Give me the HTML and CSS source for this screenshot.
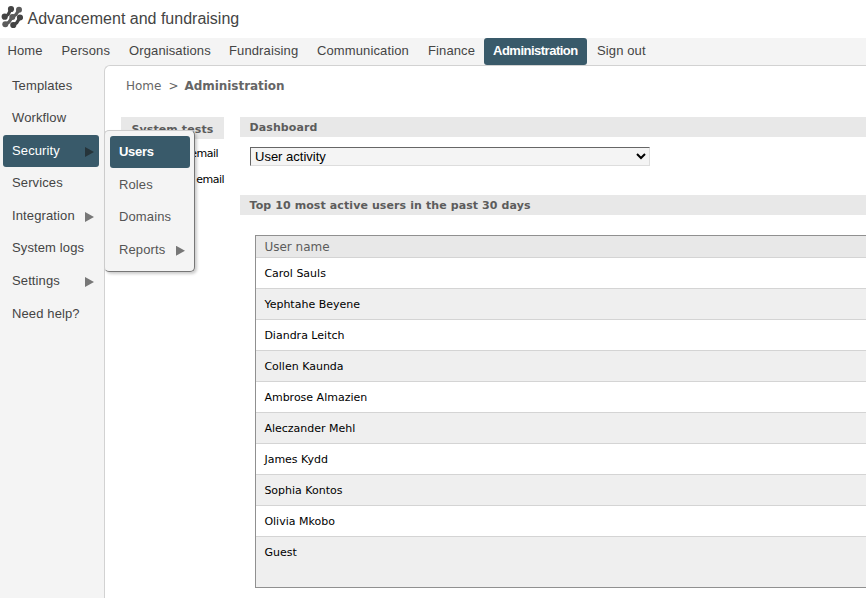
FILE: index.html
```html
<!DOCTYPE html>
<html lang="en">
<head>
<meta charset="utf-8">
<title>Advancement and fundraising</title>
<link rel="stylesheet" href="styles.css">
</head>
<body>
<header class="brand">
  <svg class="logo" viewBox="0 0 22 24" width="22" height="24">
    <g fill="none" stroke-linecap="round" stroke-width="3.2">
      <path stroke="#444" d="M3.700 11.700 7.200 9.500 10 4M12.300 20 15.700 17.800 19 12.500"/>
      <path stroke="#5c5c5c" d="M4.300 19.300 8 17 11.300 11.900 15 9.500 18 4.700"/>
    </g>
    <g fill="#444"><circle cx="3.700" cy="11.700" r="3.100"/><circle cx="10" cy="4" r="3.100"/><circle cx="12.300" cy="20" r="3.100"/><circle cx="19" cy="12.500" r="3.100"/></g>
    <g fill="#5c5c5c"><circle cx="4.300" cy="19.300" r="3"/><circle cx="11.300" cy="11.900" r="3"/><circle cx="18" cy="4.700" r="3"/></g>
  </svg>
  <span>Advancement and fundraising</span>
</header>
<nav class="topnav">
  <a class="w-home">Home</a><a class="w-persons">Persons</a><a class="w-org">Organisations</a><a class="w-fund">Fundraising</a><a class="w-comm">Communication</a><a class="w-fin">Finance</a><a class="active">Administration</a><a>Sign out</a>
</nav>
<div class="layout">
  <aside class="sidebar">
    <a>Templates</a>
    <a>Workflow</a>
    <div class="parent">
      <a class="active">Security<i class="arrow"></i></a>
      <div class="submenu">
        <a class="active">Users</a>
        <a>Roles</a>
        <a>Domains</a>
        <a>Reports<i class="arrow"></i></a>
      </div>
    </div>
    <a>Services</a>
    <a>Integration<i class="arrow"></i></a>
    <a>System logs</a>
    <a>Settings<i class="arrow"></i></a>
    <a>Need help?</a>
  </aside>
  <main class="content">
    <div class="crumbs"><span>Home</span><span class="sep">&gt;</span><b>Administration</b></div>
    <div class="columns">
      <section class="tests">
        <h2>System tests</h2>
        <p>Test email</p>
        <p>Send email</p>
      </section>
      <section class="dashboard">
        <h2>Dashboard</h2>
        <select><option>User activity</option></select>
        <h2>Top 10 most active users in the past 30 days</h2>
        <div class="users">
          <div class="head">User name</div>
          <div class="row">Carol Sauls</div>
          <div class="row">Yephtahe Beyene</div>
          <div class="row">Diandra Leitch</div>
          <div class="row">Collen Kaunda</div>
          <div class="row">Ambrose Almazien</div>
          <div class="row">Aleczander Mehl</div>
          <div class="row">James Kydd</div>
          <div class="row">Sophia Kontos</div>
          <div class="row">Olivia Mkobo</div>
          <div class="row">Guest</div>
        </div>
      </section>
    </div>
  </main>
</div>
</body>
</html>
```
FILE: styles.css
```css
* { box-sizing: border-box; }
body {
  margin: 0;
  height: 598px;
  overflow: hidden;
  background: #fff;
  color: #444;
  font-family: "Liberation Sans", Arial, sans-serif;
  font-size: 13px;
}
.brand {
  display: flex;
  height: 38px;
  padding: 5px 0 0 1px;
  font-size: 16px;
  line-height: 28px;
}
.logo { margin-right: 4.500px; }
.topnav {
  display: flex;
  height: 27px;
  background: #f4f4f4;
  line-height: 25px;
  letter-spacing: .12px;
}
.topnav a { padding-left: 10px; white-space: nowrap; }
.topnav .w-home { width: 53px; padding-left: 7.500px; }
.topnav .w-persons { width: 66px; padding-left: 8.500px; }
.topnav .w-org { width: 100px; }
.topnav .w-fund { width: 88px; }
.topnav .w-comm { width: 111px; }
.topnav .w-fin { width: 66px; }
.topnav .active {
  width: 103px;
  padding-left: 9px;
  border-radius: 3px;
  background: #395a6a;
  color: #fff;
  font-weight: bold;
  letter-spacing: -.5px;
}
.layout { display: flex; height: 533px; background: #f4f4f4; }
.sidebar {
  width: 104px;
  padding: 4px 5px 0 3px;
  letter-spacing: .12px;
}
.sidebar a {
  display: flex;
  justify-content: space-between;
  align-items: center;
  height: 32px;
  margin-bottom: .6px;
  padding: 0 5px 0 9px;
  border-radius: 3px;
}
.arrow {
  width: 9px;
  height: 10px;
  margin-top: 3px;
  background: #777;
  clip-path: polygon(0 0, 100% 50%, 0 100%);
}
.parent { position: relative; padding-top: .8px; margin-bottom: -.8px; }
.sidebar .active { background: #395a6a; color: #fff; }
.parent > .active { padding-bottom: 1px; }
.active .arrow { background: #26343a; }
.submenu {
  position: absolute;
  z-index: 2;
  top: -4px;
  left: 101px;
  width: 91px;
  height: 142px;
  padding: 5px 4px 0 5px;
  border: 1px solid #ccc;
  border-right-color: #777;
  border-bottom-color: #777;
  border-radius: 5px;
  background: #f4f4f4;
  box-shadow: 2px 2px 3px rgba(0, 0, 0, .2);
}
.submenu a { margin-bottom: .5px; padding-bottom: 1px; color: #555; }
.submenu .active { font-weight: bold; letter-spacing: -.3px; }
.content {
  flex: 1;
  min-width: 0;
  border-top: 1px solid #d2d2d2;
  border-left: 1px solid #d2d2d2;
  border-top-left-radius: 6px;
  background: #fff;
  font-family: "DejaVu Sans", Verdana, sans-serif;
  font-size: 11px;
}
.crumbs {
  height: 51px;
  padding: 12px 0 0 21px;
  color: #666;
  font-size: 12px;
  line-height: 17px;
}
.crumbs .sep { margin: 0 6px 0 7px; }
.crumbs b { letter-spacing: -.05px; }
.columns { display: flex; gap: 16px; padding-left: 16px; }
.tests { width: 103px; flex: none; }
h2 {
  height: 20px;
  margin: 0;
  padding-left: 9.500px;
  background: #e8e8e8;
  color: #5c5c5c;
  font-size: 11px;
  line-height: 21px;
  letter-spacing: .1px;
  white-space: nowrap;
}
.tests h2 { height: 22px; padding-left: 10.500px; line-height: 25px; }
.tests p {
  margin: 0;
  padding-right: 6px;
  height: 26px;
  color: #000;
  line-height: 29px;
  letter-spacing: -.5px;
  text-align: right;
}
.tests p + p { padding-right: 0; }
.dashboard { flex: 1; min-width: 0; }
select {
  display: block;
  width: 400px;
  height: 19px;
  margin: 10px 0 29px 10px;
  padding: 0;
  border: 1px solid #ddd;
  border-top-color: #666;
  border-left-color: #666;
  border-radius: 0;
  background: #f4f4f4;
  color: #000;
  font: 13px "Liberation Sans", Arial, sans-serif;
}
.users {
  height: 353px;
  margin: 20px 0 0 15px;
  border: 1px solid #909090;
  border-right: 0;
}
.head {
  height: 22px;
  padding-left: 8.400px;
  border-bottom: 1px solid #d4d4d4;
  background: #e8e8e8;
  color: #5c5c5c;
  font-size: 12px;
  line-height: 23px;
}
.row {
  height: 31px;
  padding-left: 8.400px;
  border-bottom: 1px solid #d4d4d4;
  color: #000;
  line-height: 31px;
}
.row:nth-child(odd) { background: #efefef; }
.row:last-child { height: 50px; border: 0; }
```
